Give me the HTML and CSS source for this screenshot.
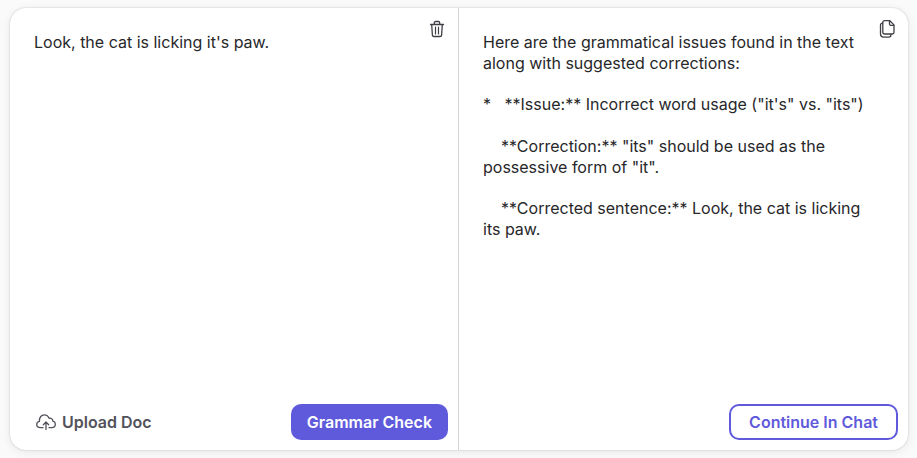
FILE: index.html
```html
<!DOCTYPE html>
<html lang="en">
<head>
  <meta charset="UTF-8">
  <meta name="viewport" content="width=device-width, initial-scale=1">
  <title>Grammar Checker</title>
  <link rel="stylesheet" href="styles.css">
</head>
<body>
  <main class="checker">
    <section class="panel">
      <div class="panel-body">
        <textarea class="text input-text" aria-label="Your text" spellcheck="false">Look, the cat is licking it's paw.</textarea>
        <button class="icon-btn" type="button" aria-label="Clear text">
          <svg width="20" height="20" viewBox="0 0 20 20" fill="none" stroke="currentColor" stroke-width="1.3" stroke-linecap="round" stroke-linejoin="round">
            <path d="M3.5 5.5h13M7.3 5.3V3.8c0-.8.5-1.3 1.300-1.300h2.800c.8 0 1.300.5 1.300 1.300v1.500M4.700 5.700l.7 10.400c.1.9.6 1.400 1.500 1.400h6.200c.9 0 1.400-.5 1.500-1.400l.7-10.400"/>
            <path d="M8.500 8v7M11.500 8v7" stroke-width="1.200"/>
          </svg>
        </button>
      </div>
      <div class="panel-footer">
        <button class="upload-btn" type="button">
          <svg width="20" height="20" viewBox="0 0 20 20" fill="none" stroke="currentColor" stroke-width="1.3" stroke-linecap="round" stroke-linejoin="round">
            <path d="M7 15.700H4.400C2.200 15.700 .7 14.400 .7 12.600c0-1.700 1.200-2.900 2.800-3.200C3 5.700 5.200 2.900 8.300 2.900c2.300 0 4 1.300 4.800 3.400 2-.4 3.700.9 3.800 2.900 1.500.4 2.400 1.500 2.400 3.100 0 2-1.500 3.400-3.500 3.400H13"/>
            <path d="M10 17.500v-7.200M7.300 12.700l2.700-2.700 2.700 2.700"/>
          </svg>
          Upload Doc
        </button>
        <button class="btn btn-primary" type="button">Grammar Check</button>
      </div>
    </section>

    <section class="panel">
      <div class="panel-body">
        <div class="text">Here are the grammatical issues found in the text along with suggested corrections:

*   **Issue:** Incorrect word usage ("it's" vs. "its")

    **Correction:** "its" should be used as the possessive form of "it".

    **Corrected sentence:** Look, the cat is licking its paw.</div>
        <button class="icon-btn" type="button" aria-label="Copy result">
          <svg width="20" height="20" viewBox="0 0 20 20" fill="none" stroke="currentColor" stroke-width="1.3" stroke-linecap="round" stroke-linejoin="round">
            <path d="M7.500 1.700h5.300l4.200 4.200v7.400c0 1-.7 1.700-1.700 1.700H7.500c-1 0-1.700-.7-1.700-1.700V3.400c0-1 .7-1.700 1.700-1.700z"/>
            <path d="M12.500 2v3c0 .8.500 1.300 1.300 1.300h3"/>
            <path d="M5.600 4.200c-1.300 0-2.100.8-2.100 2v8.800c0 1.900 1.200 3.100 3.100 3.100h5.200c1.200 0 2.100-.8 2.100-2.100V15.300"/>
          </svg>
        </button>
      </div>
      <div class="panel-footer">
        <button class="btn btn-outline" type="button">Continue In Chat</button>
      </div>
    </section>
  </main>
</body>
</html>
```
FILE: styles.css
```css
* {
  box-sizing: border-box;
}
body {
  margin: 0;
  padding: 8px 9px 8px 10px;
  background: #fafafa;
  font-family: Inter, sans-serif;
  font-size: 16px;
  color: #27272a;
}
button {
  font: inherit;
  cursor: pointer;
}
.checker {
  display: grid;
  grid-template-columns: 1fr 1fr;
  min-height: calc(100vh - 16px);
  background: #fff;
  border-radius: 16px;
  box-shadow: 0 0 2px rgba(0,0,0,0.2), 0 2px 10px rgba(0,0,0,0.08);
}
.panel {
  display: flex;
  flex-direction: column;
  min-width: 0;
}
.panel:first-child {
  border-right: 1px solid #d4d4d8;
}

/* Text area with its icon in the corner */
.panel-body {
  position: relative;
  display: flex;
  flex: 1;
}
.text {
  flex: 1;
  min-width: 0;
  padding: 24px 36px 24px 24px;
  line-height: 1.3;
  white-space: pre-wrap;
}
.input-text {
  border: 0;
  outline: 0;
  resize: none;
  background: transparent;
  font-family: inherit;
  font-size: inherit;
  color: inherit;
}
.icon-btn {
  position: absolute;
  top: 11px;
  right: 11px;
  display: flex;
  padding: 0;
  border: 0;
  background: none;
  color: #3f3f46;
}

/* Actions */
.panel-footer {
  display: flex;
  align-items: center;
  padding: 10px;
}
.upload-btn {
  display: flex;
  align-items: center;
  gap: 6px;
  padding: 0 0 0 16px;
  border: 0;
  background: none;
  color: #52525b;
  font-weight: 600;
}
.btn {
  height: 36px;
  margin-left: auto;
  padding: 0 16px;
  border: 0;
  border-radius: 10px;
  font-weight: 600;
}
.btn-primary {
  background: #5e5adb;
  color: #fff;
}
.btn-outline {
  padding: 0 18px;
  border: 2px solid #5e5adb;
  background: #fff;
  color: #5e5adb;
}
```
